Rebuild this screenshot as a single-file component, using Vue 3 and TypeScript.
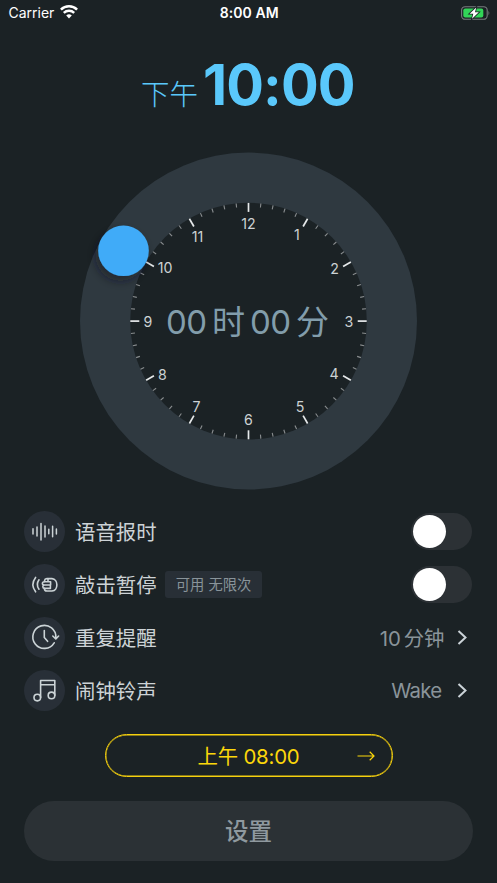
<script setup lang="ts">
import { ref } from 'vue'

interface Tick { angle: number; major: boolean }
interface Hour { n: number; x: number; y: number }

const ticks: Tick[] = Array.from({ length: 60 }, (_, i) => ({ angle: i * 6, major: i % 5 === 0 }))

const hours: Hour[] = [
  { n: 12, x: 168.5, y: 76 },
  { n: 1, x: 217, y: 87 },
  { n: 2, x: 254.5, y: 121 },
  { n: 3, x: 269, y: 174.2 },
  { n: 4, x: 254, y: 226 },
  { n: 5, x: 220, y: 259.5 },
  { n: 6, x: 168.5, y: 272.5 },
  { n: 7, x: 116.5, y: 259.5 },
  { n: 8, x: 82.5, y: 227 },
  { n: 9, x: 68, y: 174.2 },
  { n: 10, x: 85, y: 120.5 },
  { n: 11, x: 117.5, y: 89.5 },
]

const voice = ref(false)
const knock = ref(false)
</script>

<template>
  <main class="screen">
    <header class="status">
      <div class="carrier">
        <span>Carrier</span>
        <svg width="18" height="14" viewBox="0 0 18 14" fill="none" stroke="#fff">
          <path d="M0.9 4.6A11.5 11.5 0 0 1 17.1 4.6" stroke-width="2.5" />
          <path d="M3.8 7.9A7.4 7.4 0 0 1 14.2 7.9" stroke-width="2.4" />
          <path d="M9 13.4L6.2 10.6A4 4 0 0 1 11.8 10.6Z" fill="#fff" stroke="none" />
        </svg>
      </div>
      <strong class="clock">8:00 AM</strong>
      <svg class="battery" width="30" height="16" viewBox="0 0 30 16">
        <rect x="1.6" y="1.7" width="25.6" height="12.6" rx="3.6" fill="none" stroke="#777c7e" stroke-width="1.1" />
        <path d="M28.5 5.7Q30.1 8 28.5 10.3Z" fill="#777c7e" />
        <rect x="3.3" y="3.4" width="20" height="9.2" rx="2" fill="#32d558" />
        <path d="M16.2 2.4L9.6 8.7H13.3L12 13.8L18.8 7.3H15Z" fill="#fff" stroke="#1b2225" stroke-width="1.6" paint-order="stroke" />
      </svg>
    </header>

    <h1 class="time"><span class="period">下午</span><span class="digits">10:00</span></h1>

    <svg class="dial" width="337" height="337" viewBox="0 0.4 337 337">
      <defs>
        <filter id="knob-shadow" x="-50%" y="-50%" width="200%" height="200%">
          <feDropShadow dx="-3" dy="5" stdDeviation="5" flood-color="#10151a" flood-opacity="0.5" />
        </filter>
      </defs>
      <circle cx="168.5" cy="168.5" r="168.5" fill="#2f3940" />
      <circle cx="168.5" cy="168.5" r="118.3" fill="#1b2225" />
      <line
        v-for="t in ticks"
        :key="t.angle"
        x1="168.5"
        y1="50.3"
        x2="168.5"
        :y2="t.major ? 59.3 : 54.3"
        :class="t.major ? 'tick major' : 'tick'"
        :transform="`rotate(${t.angle} 168.5 168.5)`"
      />
      <text v-for="h in hours" :key="h.n" class="hour" :x="h.x" :y="h.y">{{ h.n }}</text>
      <text class="left" y="181">
        <tspan x="86">00</tspan><tspan class="unit" x="132">时</tspan>
        <tspan x="170">00</tspan><tspan class="unit" x="216">分</tspan>
      </text>
      <circle cx="43.5" cy="98.2" r="25.3" fill="#3fabf8" filter="url(#knob-shadow)" />
    </svg>

    <section class="options">
      <div class="row">
        <span class="badge">
          <svg width="41" height="41" viewBox="0 0 41 41" class="line wave">
            <path d="M9 17.8V23M13 16V25M17 12.5V29M21 15V26M24.8 18.2V22.8M28.6 15.2V25.8M32.4 18V23" />
          </svg>
        </span>
        <span class="label">语音报时</span>
        <button class="toggle" :class="{ on: voice }" @click="voice = !voice"><i /></button>
      </div>
      <div class="row">
        <span class="badge">
          <svg width="41" height="41" viewBox="0 0 41 41" class="line">
            <path d="M11.6 13.4Q6.2 20.5 11.6 27.8M15 15.8Q11.6 20.5 15 25.2" />
            <path d="M20.6 17.6V16.4Q20.8 14.6 22.8 14.6H28C34.4 14.9 34.6 26.6 28 27H22.8Q20.4 26.9 20.4 24.4" />
            <path d="M26.6 17.8H20.4Q18.4 17.9 18.4 19.4T20.4 21H26.6V17.8M20.6 21Q18.8 21.3 18.8 22.7T20.6 24.4H26.4V21M24 14.8V17.8" />
          </svg>
        </span>
        <span class="label">敲击暂停</span>
        <span class="tag">可用 无限次</span>
        <button class="toggle" :class="{ on: knock }" @click="knock = !knock"><i /></button>
      </div>
      <div class="row">
        <span class="badge">
          <svg width="41" height="41" viewBox="0 0 41 41" class="line">
            <path d="M30.2 25.8A11.5 11.5 0 1 1 31.8 20.8M28.8 19L31.8 22L34.6 19M20.3 13.5V20.5L23.6 24.3" />
          </svg>
        </span>
        <span class="label">重复提醒</span>
        <span class="value minutes"><span>10</span>分钟</span>
        <svg class="chevron" width="11" height="15" viewBox="0 0 11 15"><path d="M1.5 1L8.5 7.5L1.5 14" /></svg>
      </div>
      <div class="row">
        <span class="badge">
          <svg width="41" height="41" viewBox="0 0 41 41" class="line">
            <path d="M16.6 27.5V10.5H30.8V25.2M16.6 14.7H30.8" />
            <circle cx="13.3" cy="27.6" r="3.3" />
            <circle cx="27.5" cy="25.4" r="3.3" />
          </svg>
        </span>
        <span class="label">闹钟铃声</span>
        <span class="value wake">Wake</span>
        <svg class="chevron" width="11" height="15" viewBox="0 0 11 15"><path d="M1.5 1L8.5 7.5L1.5 14" /></svg>
      </div>
    </section>

    <button class="next">
      <span>上午 08:00</span>
      <svg width="18" height="10" viewBox="0 0 18 10"><path d="M0.5 5H17M12.7 0.8L17 5L12.7 9.2" /></svg>
    </button>
    <button class="submit">设置</button>
  </main>
</template>

<style>
body {
  background: #1b2225;
}
</style>

<style scoped>
.screen {
  display: flex;
  flex-direction: column;
  align-items: center;
  box-sizing: border-box;
  width: 497px;
  height: 883px;
  overflow: hidden;
  background: #1b2225;
  font-family: Inter, "Noto Sans CJK SC", sans-serif;
}
button {
  padding: 0;
  border: 0;
  font-family: inherit;
}
.status {
  display: grid;
  grid-template-columns: 1fr auto 1fr;
  align-items: center;
  box-sizing: border-box;
  width: 100%;
  height: 25px;
  padding: 0 7px 0 8.5px;
  color: #fff;
  font-size: 14px;
}
.carrier {
  display: flex;
  align-items: center;
  gap: 6px;
}
.carrier svg {
  margin-top: -2px;
}
.clock {
  font-weight: 600;
  letter-spacing: 0.1px;
}
.battery {
  justify-self: end;
}
.time {
  display: flex;
  align-items: baseline;
  width: 213px;
  height: 70px;
  margin: 25px 0 33px;
  color: #5ac8fb;
  line-height: 70px;
  white-space: nowrap;
}
.period {
  width: 62px;
  margin-left: -1px;
  font-size: 28.5px;
  font-weight: 300;
}
.digits {
  font-size: 56px;
  font-weight: 700;
  letter-spacing: -0.9px;
}
.dial {
  flex: none;
  overflow: visible;
}
.tick {
  stroke: #8a8e90;
  stroke-width: 1.1;
}
.tick.major {
  stroke: #e6e9ea;
  stroke-width: 1.7;
}
.hour {
  fill: #cdd2d4;
  font-size: 14.2px;
  font-weight: 400;
  text-anchor: middle;
}
.left {
  fill: #829dab;
  font-size: 33px;
  font-weight: 400;
  letter-spacing: -0.6px;
}
.unit {
  font-size: 33px;
}
.options {
  display: flex;
  flex-direction: column;
  gap: 12px;
  width: 449px;
  margin-top: 21px;
}
.row {
  display: flex;
  align-items: center;
  height: 41px;
}
.badge {
  width: 41px;
  height: 41px;
  margin-right: 10px;
  border-radius: 50%;
  background: #282f37;
}
.line {
  display: block;
  fill: none;
  stroke: #cbd3d6;
  stroke-width: 1.6;
  stroke-linecap: round;
  stroke-linejoin: round;
}
.wave {
  stroke-width: 1.5;
}
.label {
  padding-top: 3px;
  color: #cdd3d6;
  font-size: 20.4px;
  line-height: 30px;
}
.tag {
  width: 97px;
  height: 27px;
  margin-left: 8.5px;
  border-radius: 3px;
  background: #282f36;
  color: #89949a;
  font-size: 14.3px;
  line-height: 27px;
  text-align: center;
}
.toggle {
  width: 61px;
  height: 37px;
  margin-right: 1px;
  margin-left: auto;
  border-radius: 19px;
  background: #2c3135;
}
.toggle i {
  display: block;
  width: 33px;
  height: 33px;
  margin-left: 2px;
  border-radius: 50%;
  background: #fff;
}
.toggle.on i {
  margin-left: 26px;
}
.value {
  margin-left: auto;
  padding-top: 2px;
  color: #8a949a;
  font-size: 20.4px;
  font-weight: 400;
  line-height: 30px;
}
.minutes {
  margin-right: 12px;
}
.minutes span {
  margin-right: 3px;
  letter-spacing: -0.1px;
}
.wake {
  margin-right: 15px;
  padding-top: 0;
  letter-spacing: -0.7px;
}
.chevron {
  margin-right: 5.5px;
  fill: none;
  stroke: #cbd3d8;
  stroke-width: 2;
}
.next {
  display: grid;
  grid-template-columns: 1fr auto 1fr;
  align-items: center;
  box-sizing: border-box;
  width: 288px;
  height: 43px;
  margin-top: 23px;
  border: 1px solid #f5d00e;
  border-radius: 22px;
  box-shadow: inset 0 0 0 0.4px #f5d00e;
  background: none;
  color: #fcd70a;
  font-size: 20.4px;
}
.next span {
  grid-column: 2;
  margin-top: -1px;
  letter-spacing: -0.2px;
}
.next svg {
  justify-self: end;
  margin-right: 17px;
  fill: none;
  stroke: #fcd70a;
  stroke-width: 1.2;
}
.submit {
  box-sizing: border-box;
  width: 449px;
  height: 60px;
  margin-top: 24px;
  padding-top: 2px;
  border-radius: 30px;
  background: #2b3135;
  color: #8f999f;
  font-size: 23.5px;
  font-weight: 500;
  line-height: 58px;
}
</style>
